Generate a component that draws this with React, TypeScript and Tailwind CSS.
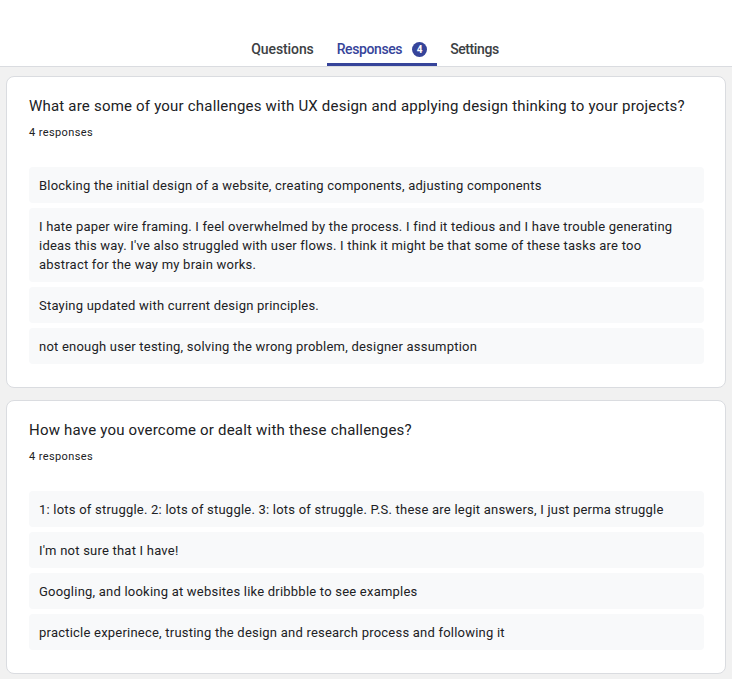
import React from "react";

const cards = [
  {
    q: "What are some of your challenges with UX design and applying design thinking to your projects?",
    answers: [
      "Blocking the initial design of a website, creating components, adjusting components",
      "I hate paper wire framing. I feel overwhelmed by the process. I find it tedious and I have trouble generating ideas this way. I've also struggled with user flows. I think it might be that some of these tasks are too abstract for the way my brain works.",
      "Staying updated with current design principles.",
      "not enough user testing, solving the wrong problem, designer assumption",
    ],
  },
  {
    q: "How have you overcome or dealt with these challenges?",
    answers: [
      "1: lots of struggle. 2: lots of stuggle. 3: lots of struggle. P.S. these are legit answers, I just perma struggle",
      "I'm not sure that I have!",
      "Googling, and looking at websites like dribbble to see examples",
      "practicle experinece, trusting the design and research process and following it",
    ],
  },
];

export default function App() {
  return (
    <div
      className="min-h-[679px] bg-[#f1f1f1] text-[#202124]"
      style={{ fontFamily: "Roboto, 'Noto Sans', sans-serif" }}
    >
      <div className="h-[67px] bg-white border-b border-[#dadce0] flex items-end justify-center pl-[18px]">
        <div className="flex items-end gap-[3px] text-[14px] leading-[20px] font-medium">
          <div className="px-[10px] pb-[7px] text-[#3c4043] tracking-[-0.1px]">Questions</div>
          <div className="px-[10px] pb-[4px] border-b-[3px] border-[#36449a] flex items-center gap-[10px] text-[#36449a]">
            <span className="tracking-[-0.4px]">Responses</span>
            <span className="w-[15px] h-[15px] rounded-full bg-[#36449a] text-white text-[10px] leading-[15px] font-bold flex items-center justify-center">
              4
            </span>
          </div>
          <div className="px-[10px] pb-[7px] text-[#3c4043] tracking-[-0.4px]">Settings</div>
        </div>
      </div>
      <div className="px-[6px] pt-[9px] pb-[4px] flex flex-col gap-[12px]">
        {cards.map((c, i) => (
          <div
            key={i}
            className="bg-white border border-[#dadce0] rounded-[8px] pt-[17px] pb-[23px] pl-[22px] pr-[21px]"
          >
            <div className="text-[15px] leading-[24px] text-[#202124] tracking-[0.2px]">{c.q}</div>
            <div className="mt-[7px] text-[11px] leading-[16px] text-[#202124] tracking-[0.4px]">
              4 responses
            </div>
            <div className="mt-[26px] flex flex-col gap-[5px]">
              {c.answers.map((a, j) => (
                <div
                  key={j}
                  className="bg-[#f8f9fa] rounded-[4px] px-[10px] py-[8.5px] text-[13px] leading-[19px] text-[#202124] tracking-[0.22px]"
                >
                  {a}
                </div>
              ))}
            </div>
          </div>
        ))}
      </div>
    </div>
  );
}
